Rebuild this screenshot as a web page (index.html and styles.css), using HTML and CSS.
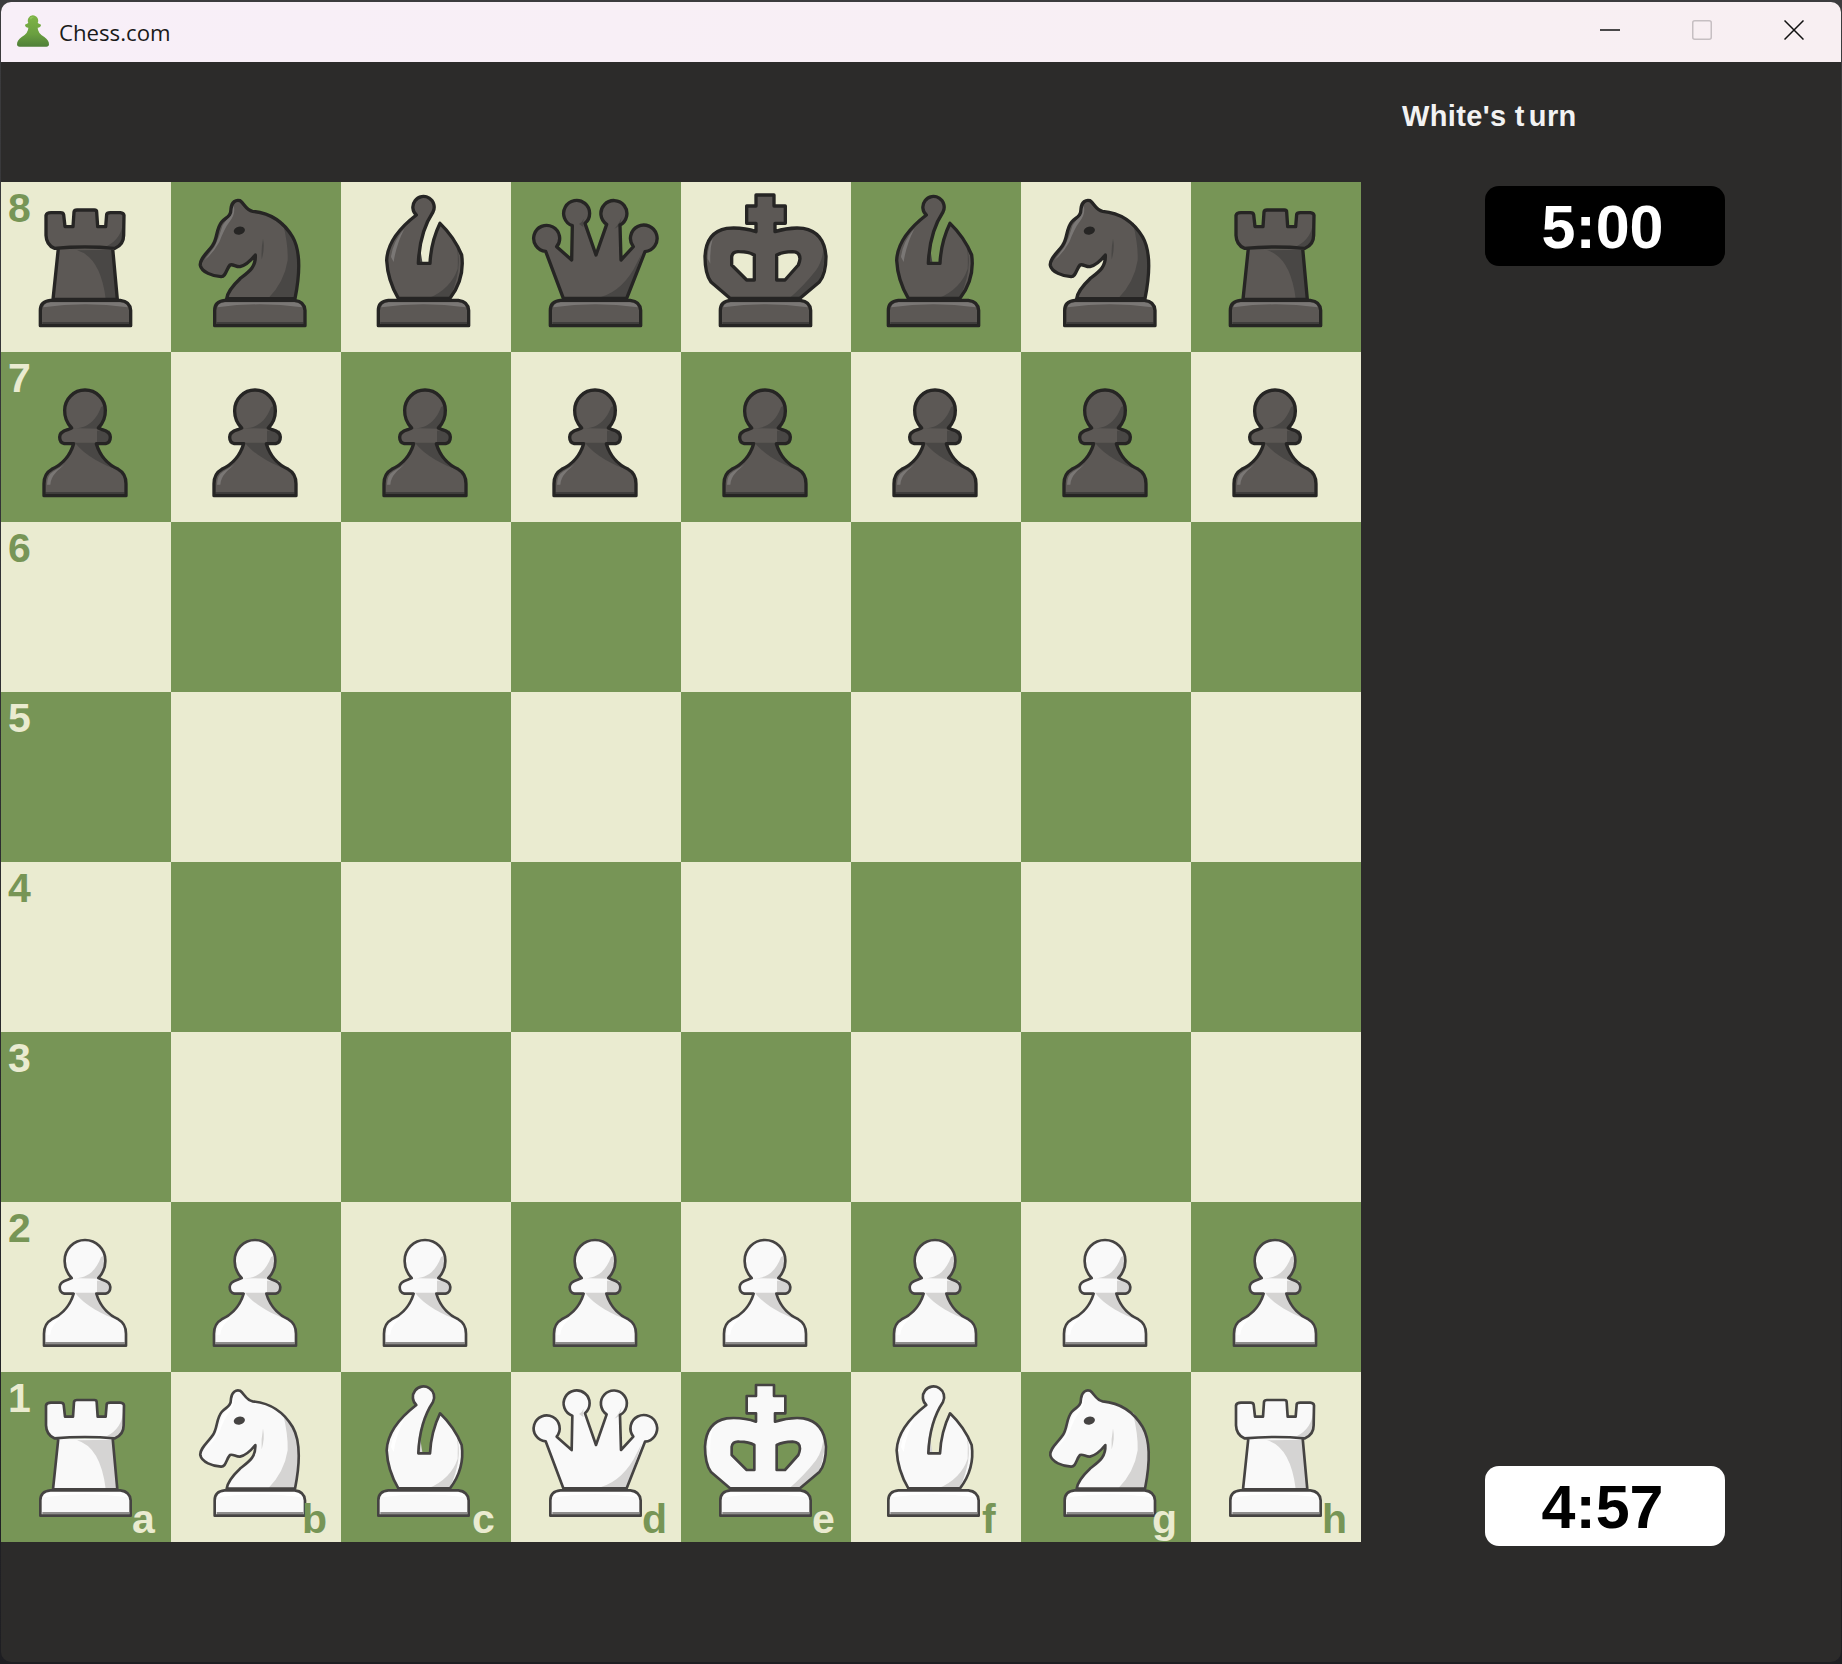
FILE: index.html
```html
<!DOCTYPE html>
<html lang="en">
<head>
    <meta charset="UTF-8">
    <meta name="viewport" content="width=device-width, initial-scale=1.0">
    <title>Chess.com</title>
    <link rel="stylesheet" href="styles.css">
</head>
<body>
    <!-- piece drawings, each on a 510 unit square -->
    <svg class="defs" aria-hidden="true">
        <defs>
            <path id="base-shape" d="M118 431 V385 Q118 358 148 355 H358 Q387 358 389 385 V431 Z"/>
            <g id="base">
                <use href="#base-shape" class="fill"/>
                <path class="hi" d="M127 376 Q128 362 150 361 H356 Q378 362 380 376 Q252 358 127 376 Z"/>
                <path class="band" d="M124 420 H384 V428 H124 Z"/>
                <use href="#base-shape" class="line"/>
            </g>

            <path id="pawn-shape" d="M129 431 V395 Q129 365 152 352 C172 343 205 320 218 275 H190 Q176 272 176 255 Q176 240 200 233 L212 228 Q190 205 191 175 A61 61 0 0 1 313 175 Q314 205 292 228 L304 233 Q328 240 328 255 Q328 272 314 275 H286 C299 320 332 343 352 352 Q375 365 375 395 V431 Z"/>
            <path id="rook-shape" d="M172 199 L156 352 H349 L335 199 H342 Q368 188 368 160 L369 100 Q368 93 358 92 H328 Q318 92 317 97 L314 134 H290 L287 90 Q287 84 280 84 H228 Q220 84 219 90 L216 134 H192 L188 98 Q187 92 178 92 H150 Q137 92 135 100 L135 160 Q136 188 160 199 Z M160 199 Q252 191 342 199"/>
            <path id="knight-shape" d="M167 350 Q170 325 207 290 C235 268 255 255 253 219 C240 235 225 250 207 254 C195 255 185 245 177 249 C165 262 165 285 150 284 C125 283 92 270 88 250 C85 230 112 210 125 190 C140 170 135 140 152 120 C165 105 180 105 180 80 C182 60 195 52 207 56 C220 65 225 85 245 88 C290 92 335 115 365 165 C385 200 390 260 372 350 Z"/>
            <path id="bishop-shape" d="M172 349 Q140 295 137 235 Q140 165 226 99 A32 32 0 1 1 276 90 Q236 150 232 244 H267 Q270 180 297 124 Q340 165 362 219 Q372 290 327 349 Z"/>
            <path id="queen-shape" d="M157 349 L104 208 A39 39 0 1 1 137 194 L182 234 L184 131 A39 39 0 1 1 222 124 L255 219 L287 127 A39 39 0 1 1 327 129 L330 234 L367 194 A40 40 0 1 1 402 209 L347 349 Z"/>
            <path id="king-shape" fill-rule="evenodd" d="M147 349 L90 300 Q72 275 72 224 Q75 150 137 139 Q185 135 225 149 V124 H197 V72 H225 V39 H279 V72 H313 V124 H282 V149 Q325 135 367 139 Q430 150 435 224 Q435 275 415 300 L357 349 Z M152 224 Q155 207 175 209 Q205 210 220 219 V294 H197 L152 249 Z M287 219 Q305 210 335 209 Q357 210 357 230 Q356 240 352 249 L312 294 H287 Z"/>

            <symbol id="pawn" viewBox="0 0 510 510">
                <use href="#pawn-shape" class="fill"/>
                <path class="shade" d="M222 272 H288 C298 315 330 340 352 354 C310 340 250 310 222 272 Z"/>
                <path class="shade" d="M288 236 H326 V272 H288 Z"/>
                <path class="shade" d="M210 228 C240 232 280 222 300 165 L312 160 Q316 205 292 230 Z"/>
                <path class="hi" d="M138 398 Q138 370 158 358 L190 338 C170 355 150 370 148 398 Z"/>
                <path class="band" d="M133 420 H371 V428 H133 Z"/>
                <use href="#pawn-shape" class="line"/>
            </symbol>

            <symbol id="rook" viewBox="0 0 510 510">
                <use href="#rook-shape" class="fill"/>
                <path class="shade" d="M228 205 Q298 225 314 350 H349 L335 203 Z"/>
                <path class="shade" d="M366 120 Q362 170 318 192 L345 194 Q368 180 368 150 Z"/>
                <use href="#rook-shape" class="line"/>
                <use href="#base"/>
            </symbol>

            <symbol id="knight" viewBox="0 0 510 510">
                <use href="#knight-shape" class="fill"/>
                <path class="shade" d="M335 120 Q352 190 350 235 Q340 300 292 349 H372 Q392 250 368 165 Z"/>
                <path class="hi" d="M188 70 Q172 110 155 130 Q145 165 130 195 Q115 215 100 235 Q125 215 145 180 Q160 140 175 120 Q195 95 188 70 Z"/>
                <path class="shade" d="M276 170 Q282 200 272 232 Q270 200 276 170 Z"/>
                <use href="#knight-shape" class="line"/>
                <ellipse class="eye" cx="205" cy="146" rx="17" ry="12" transform="rotate(-12 205 146)"/>
                <use href="#base" x="13"/>
            </symbol>

            <symbol id="bishop" viewBox="0 0 510 510">
                <use href="#bishop-shape" class="fill"/>
                <path class="shade" d="M348 195 Q366 260 326 349 H262 Q330 320 350 260 Q352 225 348 195 Z"/>
                <path class="shade" d="M236 190 L244 150 Q232 190 228 240 L244 240 Z"/>
                <path class="hi" d="M150 225 Q155 180 190 140 Q165 190 158 240 Z"/>
                <use href="#bishop-shape" class="line"/>
                <use href="#base" x="-6"/>
            </symbol>

            <symbol id="queen" viewBox="0 0 510 510">
                <use href="#queen-shape" class="fill"/>
                <path class="shade" d="M392 215 L347 349 H255 Q325 335 368 262 Z"/>
                <path class="shade" d="M218 110 Q215 130 218 136 L204 126 Q214 120 218 110 Z"/>
                <path class="shade" d="M332 106 Q322 130 310 140 L326 132 Z"/>
                <use href="#queen-shape" class="line"/>
                <use href="#base"/>
            </symbol>

            <symbol id="king" viewBox="0 0 510 510">
                <use href="#king-shape" class="fill"/>
                <path class="shade" d="M428 190 Q436 240 415 296 L355 349 H325 Q370 310 405 265 Q426 235 428 190 Z"/>
                <path class="hi" d="M80 230 Q80 190 95 170 Q86 200 88 245 Z"/>
                <use href="#king-shape" class="line"/>
                <use href="#base"/>
            </symbol>

            <linearGradient id="logo-green" x1="0" y1="0" x2="0" y2="1">
                <stop offset="0" stop-color="#7fb447"/>
                <stop offset="0.6" stop-color="#6a9f40"/>
                <stop offset="1" stop-color="#4f7f38"/>
            </linearGradient>
        </defs>
    </svg>

    <div class="window">
        <div class="titlebar">
            <svg class="logo" viewBox="0 0 96 96">
                <path fill="url(#logo-green)" d="M47 1 A16 16 0 0 1 62 24 L72 29 Q72 37 62 38 Q62 54 82 66 Q96 76 96 88 Q96 95 88 95 H8 Q0 95 0 88 Q0 76 14 66 Q34 54 34 38 Q24 37 24 29 L34 24 A16 16 0 0 1 47 1 Z"/>
                <path fill="#8fc25a" d="M38 8 Q44 3 54 6 Q44 7 42 15 Z"/>
            </svg>
            <span class="title">Chess.com</span>
            <div class="controls">
                <button class="control" aria-label="Minimize">
                    <svg viewBox="0 0 20 20"><path class="ctl-line" d="M0 10 H20"/></svg>
                </button>
                <button class="control" aria-label="Maximize">
                    <svg viewBox="0 0 20 20"><rect class="ctl-off" x="0.75" y="0.75" width="18.5" height="18.5" rx="2"/></svg>
                </button>
                <button class="control" aria-label="Close">
                    <svg viewBox="0 0 20 20"><path class="ctl-line" d="M0.5 0.5 L19.5 19.5 M19.5 0.5 L0.5 19.5"/></svg>
                </button>
            </div>
        </div>

        <div class="content">
            <div class="board">
                <div class="sq light"><svg class="piece black"><use href="#rook"/></svg><span class="rank">8</span></div>
                <div class="sq dark"><svg class="piece black"><use href="#knight"/></svg></div>
                <div class="sq light"><svg class="piece black"><use href="#bishop"/></svg></div>
                <div class="sq dark"><svg class="piece black"><use href="#queen"/></svg></div>
                <div class="sq light"><svg class="piece black"><use href="#king"/></svg></div>
                <div class="sq dark"><svg class="piece black"><use href="#bishop"/></svg></div>
                <div class="sq light"><svg class="piece black"><use href="#knight"/></svg></div>
                <div class="sq dark"><svg class="piece black"><use href="#rook"/></svg></div>

                <div class="sq dark"><svg class="piece black"><use href="#pawn"/></svg><span class="rank">7</span></div>
                <div class="sq light"><svg class="piece black"><use href="#pawn"/></svg></div>
                <div class="sq dark"><svg class="piece black"><use href="#pawn"/></svg></div>
                <div class="sq light"><svg class="piece black"><use href="#pawn"/></svg></div>
                <div class="sq dark"><svg class="piece black"><use href="#pawn"/></svg></div>
                <div class="sq light"><svg class="piece black"><use href="#pawn"/></svg></div>
                <div class="sq dark"><svg class="piece black"><use href="#pawn"/></svg></div>
                <div class="sq light"><svg class="piece black"><use href="#pawn"/></svg></div>

                <div class="sq light"><span class="rank">6</span></div>
                <div class="sq dark"></div>
                <div class="sq light"></div>
                <div class="sq dark"></div>
                <div class="sq light"></div>
                <div class="sq dark"></div>
                <div class="sq light"></div>
                <div class="sq dark"></div>

                <div class="sq dark"><span class="rank">5</span></div>
                <div class="sq light"></div>
                <div class="sq dark"></div>
                <div class="sq light"></div>
                <div class="sq dark"></div>
                <div class="sq light"></div>
                <div class="sq dark"></div>
                <div class="sq light"></div>

                <div class="sq light"><span class="rank">4</span></div>
                <div class="sq dark"></div>
                <div class="sq light"></div>
                <div class="sq dark"></div>
                <div class="sq light"></div>
                <div class="sq dark"></div>
                <div class="sq light"></div>
                <div class="sq dark"></div>

                <div class="sq dark"><span class="rank">3</span></div>
                <div class="sq light"></div>
                <div class="sq dark"></div>
                <div class="sq light"></div>
                <div class="sq dark"></div>
                <div class="sq light"></div>
                <div class="sq dark"></div>
                <div class="sq light"></div>

                <div class="sq light"><svg class="piece white"><use href="#pawn"/></svg><span class="rank">2</span></div>
                <div class="sq dark"><svg class="piece white"><use href="#pawn"/></svg></div>
                <div class="sq light"><svg class="piece white"><use href="#pawn"/></svg></div>
                <div class="sq dark"><svg class="piece white"><use href="#pawn"/></svg></div>
                <div class="sq light"><svg class="piece white"><use href="#pawn"/></svg></div>
                <div class="sq dark"><svg class="piece white"><use href="#pawn"/></svg></div>
                <div class="sq light"><svg class="piece white"><use href="#pawn"/></svg></div>
                <div class="sq dark"><svg class="piece white"><use href="#pawn"/></svg></div>

                <div class="sq dark"><svg class="piece white"><use href="#rook"/></svg><span class="rank">1</span><span class="file">a</span></div>
                <div class="sq light"><svg class="piece white"><use href="#knight"/></svg><span class="file">b</span></div>
                <div class="sq dark"><svg class="piece white"><use href="#bishop"/></svg><span class="file">c</span></div>
                <div class="sq light"><svg class="piece white"><use href="#queen"/></svg><span class="file">d</span></div>
                <div class="sq dark"><svg class="piece white"><use href="#king"/></svg><span class="file">e</span></div>
                <div class="sq light"><svg class="piece white"><use href="#bishop"/></svg><span class="file">f</span></div>
                <div class="sq dark"><svg class="piece white"><use href="#knight"/></svg><span class="file">g</span></div>
                <div class="sq light"><svg class="piece white"><use href="#rook"/></svg><span class="file">h</span></div>
            </div>

            <div class="sidebar">
                <div class="status">White's t<span class="gap">urn</span></div>
                <div class="timer timer-black">5:00</div>
                <div class="timer timer-white">4:57</div>
            </div>
        </div>
    </div>
</body>
</html>
```

FILE: styles.css
```css
html, body { margin: 0; height: 100%; }
body { background: linear-gradient(#3c3c3e, #1e1e22); font-family: "Liberation Sans", Arial, sans-serif; overflow: hidden; }
.defs { position: absolute; width: 0; height: 0; }

.window { height: 1660px; margin: 2px 1px; background: #2c2b2a; border-radius: 10px; overflow: hidden; }

.titlebar { height: 60px; display: flex; align-items: center; background: linear-gradient(90deg, #f8eff8, #f8eff2); }
.logo { width: 32px; height: 32px; margin-left: 16px; margin-top: -3px; }
.title { margin-left: 10px; font-family: "Open Sans", "Noto Sans", sans-serif; font-size: 22.2px; color: #1a1a1a; }
.controls { margin-left: auto; margin-right: 1px; display: flex; }
.control { width: 92px; height: 60px; padding: 0; border: none; background: none; display: flex; align-items: center; justify-content: center; }
.control svg { width: 20px; height: 20px; margin-top: -4px; }
.ctl-line { fill: none; stroke: #111; stroke-width: 1.5; }
.ctl-off { fill: none; stroke: #c6bfc2; stroke-width: 1.5; }

.content { display: flex; height: 1600px; }
.board { margin-top: 120px; display: grid; grid-template-columns: repeat(8, 170px); grid-auto-rows: 170px; align-self: flex-start; }
.sq { position: relative; }
.light { background: #eaebd0; color: #779556; }
.dark { background: #779556; color: #eaebd0; }
.rank, .file { position: absolute; font-size: 41px; font-weight: bold; line-height: 1; }
.rank { left: 7px; top: 6px; }
.file { left: 131px; bottom: 2px; }

.piece { display: block; width: 170px; height: 170px; }
.black { --fill: #5c5855; --line: #262524; --shade: #494745; --hi: #7a7775; --band: #403e3d; --sw: 10; }
.white { --fill: #f9f9f9; --line: #454342; --shade: #d5d4d3; --hi: #ffffff; --band: #8f8e8d; --sw: 8; }
.fill { fill: var(--fill); }
.line { fill: none; stroke: var(--line); stroke-width: var(--sw); stroke-linejoin: round; }
.shade { fill: var(--shade); }
.hi { fill: var(--hi); }
.band { fill: var(--band); }
.eye { fill: var(--line); }

.sidebar { flex: 1; display: flex; flex-direction: column; padding-top: 40px; padding-bottom: 116px; box-sizing: border-box; }
.status { margin-left: 41px; height: 29px; font-size: 29px; line-height: 1; font-weight: bold; color: #f2f2f2; letter-spacing: 0.35px; }
.gap { margin-left: 4px; }
.timer { width: 240px; height: 80px; margin-left: 124px; padding-right: 5px; padding-top: 2px; box-sizing: border-box; border-radius: 14px; display: flex; align-items: center; justify-content: center; font-size: 61px; font-weight: bold; }
.timer-black { margin-top: 55px; background: #000; color: #fff; }
.timer-white { margin-top: auto; background: #fff; color: #000; }
```
